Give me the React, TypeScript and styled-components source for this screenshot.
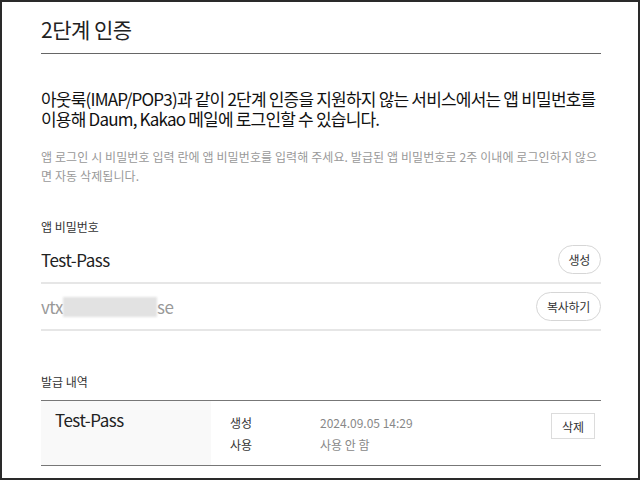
import styled, { createGlobalStyle } from "styled-components";

const GlobalStyle = createGlobalStyle`
  body {
    margin: 0;
    background: #fff;
    font-family: "Noto Sans CJK KR", "Noto Sans", sans-serif;
    color: #222;
  }
`;

const Frame = styled.div`
  width: 640px;
  height: 480px;
  box-sizing: border-box;
  border: 2px solid #2a2a2a;
  padding: 0 37px 0 39px;
  overflow: hidden;
`;

const Title = styled.h2`
  margin: 0;
  padding: 12px 0 9px;
  font-size: 21px;
  font-weight: 400;
  letter-spacing: -0.5px;
  color: #222;
  border-bottom: 1px solid #666;
`;

const Lead = styled.p`
  margin: 35px 0 0;
  font-size: 17px;
  line-height: 20px;
  letter-spacing: -0.8px;
  color: #111;
`;

const Note = styled.p`
  margin: 18px 0 0;
  font-size: 12px;
  line-height: 19px;
  letter-spacing: 0.1px;
  color: #999;
`;

const Label = styled.div<{ top: number }>`
  margin: ${(p) => p.top}px 0 2px;
  font-size: 12px;
  line-height: 16px;
  color: #333;
`;

const FieldRow = styled.div`
  display: flex;
  align-items: center;
  justify-content: space-between;
  height: 45px;
  border-bottom: 2px solid #e6e6e6;
`;

const FieldText = styled.span<{ muted?: boolean }>`
  display: flex;
  align-items: center;
  font-size: 17px;
  letter-spacing: -0.5px;
  color: ${(p) => (p.muted ? "#999" : "#222")};
`;

const Masked = styled.span`
  display: inline-block;
  width: 94px;
  height: 20px;
  background: #e2e2e2;
  filter: blur(1px);
`;

const PillButton = styled.button`
  height: 29px;
  padding: 0 10px;
  border: 1px solid #d6d6d6;
  border-radius: 15px;
  background: #fff;
  font-family: inherit;
  font-size: 12px;
  color: #333;
  letter-spacing: -0.3px;
`;

const History = styled.div`
  display: grid;
  grid-template-columns: 170px 1fr;
  margin-top: 10px;
  height: 64px;
  border-top: 1px solid #777;
  border-bottom: 1px solid #777;
`;

const NameCell = styled.div`
  background: #f9f9f9;
  padding: 6px 14px;
  font-size: 17px;
  letter-spacing: -0.5px;
  color: #222;
`;

const InfoCell = styled.div`
  display: flex;
  justify-content: space-between;
  align-items: flex-start;
  padding: 12px 6px 0 19px;
`;

const InfoList = styled.dl`
  display: grid;
  grid-template-columns: 90px auto;
  row-gap: 3px;
  margin: 0;
  font-size: 12px;
  line-height: 19px;
`;

const InfoTerm = styled.dt`
  color: #333;
`;

const InfoValue = styled.dd`
  margin: 0;
  color: #888;
`;

const SquareButton = styled.button`
  height: 26px;
  padding: 0 10px;
  border: 1px solid #dcdcdc;
  background: #fff;
  font-family: inherit;
  font-size: 12px;
  color: #333;
`;

export default function App() {
  return (
    <Frame>
      <GlobalStyle />
      <Title>2단계 인증</Title>
      <Lead>
        아웃룩(IMAP/POP3)과 같이 2단계 인증을 지원하지 않는 서비스에서는 앱
        비밀번호를 이용해 Daum, Kakao 메일에 로그인할 수 있습니다.
      </Lead>
      <Note>
        앱 로그인 시 비밀번호 입력 란에 앱 비밀번호를 입력해 주세요. 발급된 앱
        비밀번호로 2주 이내에 로그인하지 않으면 자동 삭제됩니다.
      </Note>
      <Label top={34}>앱 비밀번호</Label>
      <FieldRow>
        <FieldText>Test-Pass</FieldText>
        <PillButton>생성</PillButton>
      </FieldRow>
      <FieldRow>
        <FieldText muted>
          vtx<Masked />se
        </FieldText>
        <PillButton>복사하기</PillButton>
      </FieldRow>
      <Label top={43}>발급 내역</Label>
      <History>
        <NameCell>Test-Pass</NameCell>
        <InfoCell>
          <InfoList>
            <InfoTerm>생성</InfoTerm>
            <InfoValue>2024.09.05 14:29</InfoValue>
            <InfoTerm>사용</InfoTerm>
            <InfoValue>사용 안 함</InfoValue>
          </InfoList>
          <SquareButton>삭제</SquareButton>
        </InfoCell>
      </History>
    </Frame>
  );
}
